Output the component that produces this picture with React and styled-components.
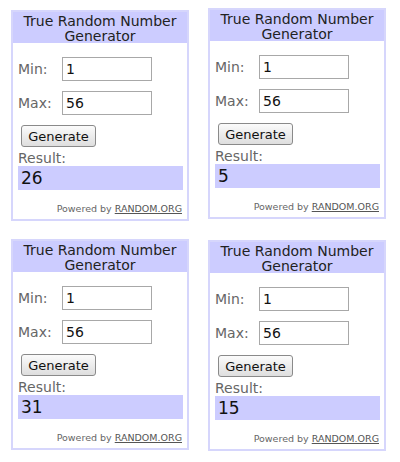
import React from 'react'
import styled, { createGlobalStyle } from 'styled-components'

const GlobalStyle = createGlobalStyle`
  html, body {
    margin: 0;
    padding: 0;
    background: #fff;
  }
  body {
    font-family: "DejaVu Sans", Verdana, sans-serif;
  }
`

const draws = [
  { result: '26', shift: 0 },
  { result: '5', shift: -2 },
  { result: '31', shift: 0 },
  { result: '15', shift: 1 },
]

export default function App() {
  return (
    <>
      <GlobalStyle />
      <Grid>
        {draws.map((d, i) => (
          <Widget key={i} $shift={d.shift}>
            <Title>True Random Number<br />Generator</Title>
            <Form>
              <FieldRow>
                <Label>Min:</Label>
                <Field defaultValue="1" />
              </FieldRow>
              <FieldRow>
                <Label>Max:</Label>
                <Field defaultValue="56" />
              </FieldRow>
              <GenerateButton>Generate</GenerateButton>
              <ResultLabel>Result:</ResultLabel>
              <ResultBox>{d.result}</ResultBox>
              <Powered>Powered by <a>RANDOM.ORG</a></Powered>
            </Form>
          </Widget>
        ))}
      </Grid>
    </>
  )
}

// page grid, two widgets per row
const Grid = styled.div`
  display: grid;
  grid-template-columns: 178px 177px;
  column-gap: 19px;
  row-gap: 18px;
  padding: 10px 0 0 11px;
`

const Widget = styled.div`
  box-sizing: border-box;
  width: 178px;
  height: 211px;
  margin-top: ${p => p.$shift}px;
  border: 2px solid #d6d6fc;
  background: #fff;
  display: flex;
  flex-direction: column;
`

const Title = styled.div`
  background: #ccccff;
  color: #222;
  text-align: center;
  font-size: 14px;
  line-height: 15px;
  height: 31px;
  box-sizing: border-box;
  padding-top: 2px;
`

const Form = styled.div`
  padding: 14px 4px 0 5px;
  display: flex;
  flex-direction: column;
`

const FieldRow = styled.div`
  display: flex;
  align-items: center;
  height: 24px;
  margin-bottom: 10px;
`

const Label = styled.span`
  width: 44px;
  color: #666;
  font-size: 14px;
`

const Field = styled.input`
  box-sizing: border-box;
  width: 90px;
  height: 24px;
  border: 1px solid #a8a8a8;
  padding: 0 3px;
  font-family: "DejaVu Sans", Verdana, sans-serif;
  font-size: 14px;
  color: #111;
  outline: none;
`

const GenerateButton = styled.button`
  align-self: flex-start;
  margin-left: 3px;
  width: 75px;
  height: 22px;
  padding: 0;
  border: 1px solid #8a8a8a;
  border-radius: 3px;
  background: linear-gradient(#fbfbfb, #dedede);
  font-family: "DejaVu Sans", Verdana, sans-serif;
  font-size: 13px;
  color: #111;
`

const ResultLabel = styled.div`
  margin-top: 3px;
  color: #666;
  font-size: 14px;
  line-height: 16px;
`

const ResultBox = styled.div`
  background: #ccccff;
  height: 24px;
  line-height: 24px;
  padding-left: 3px;
  font-size: 17px;
  color: #111;
`

const Powered = styled.div`
  margin-top: 13px;
  text-align: right;
  font-size: 9.5px;
  color: #666;
  padding-right: 1px;

  a {
    color: #555;
    text-decoration: underline;
  }
`
